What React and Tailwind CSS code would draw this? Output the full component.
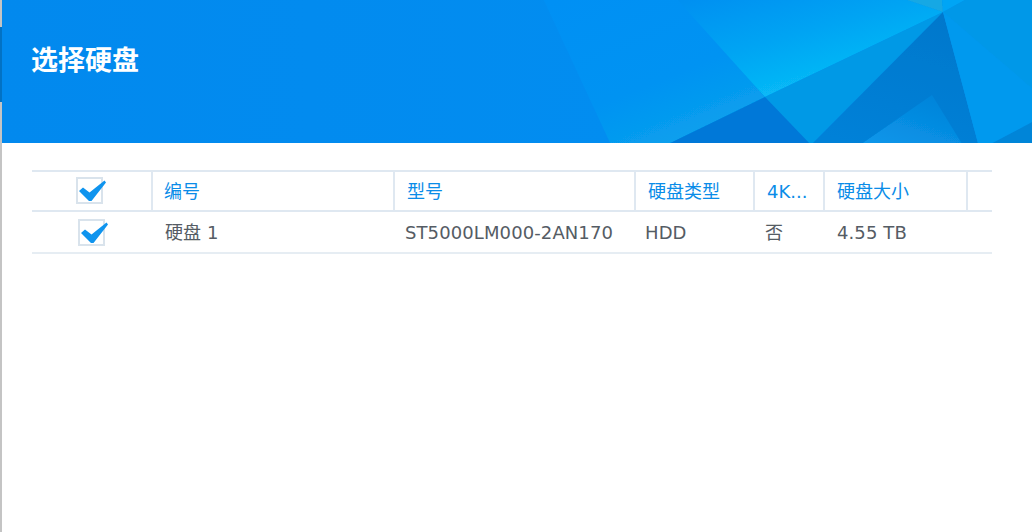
const FONT = "font-['DejaVu_Sans','Noto_Sans_CJK_SC',sans-serif]";

const COLUMNS = [
  { label: '编号', width: 'w-[242px]', pad: 'pl-[11px]' },
  { label: '型号', width: 'w-[241px]', pad: 'pl-[12px]' },
  { label: '硬盘类型', width: 'w-[119px]', pad: 'pl-[12px]' },
  { label: '4K...', width: 'w-[70px]', pad: 'pl-[12px]' },
  { label: '硬盘大小', width: 'w-[143px]', pad: 'pl-[12px]' },
];

const CELLS = [
  { text: '硬盘 1', width: 'w-[242px]', pad: 'pl-[12px]' },
  { text: 'ST5000LM000-2AN170', width: 'w-[240px]', pad: 'pl-[10px]' },
  { text: 'HDD', width: 'w-[120px]', pad: 'pl-[10px]' },
  { text: '否', width: 'w-[71px]', pad: 'pl-[10px]' },
  { text: '4.55 TB', width: 'w-[143px]', pad: 'pl-[11px]' },
];

function Check() {
  return (
    <span className="relative block h-[27px] w-[27px] border-2 border-[#d9e3ec] bg-white">
      <svg viewBox="0 0 27 21" className="absolute left-[1px] top-[1px] h-[21px] w-[27px]">
        <path d="M0 11 L4 7.5 L10.5 12.5 L25.5 0.5 L27 2.5 L12.5 21 L10 21 Z" fill="#0f94ee" />
      </svg>
    </span>
  );
}

function Banner() {
  return (
    <svg viewBox="0 0 1030 143" preserveAspectRatio="none" className="block h-[143px] w-full">
      <defs>
        <linearGradient id="base" x1="0" y1="0" x2="1" y2="0">
          <stop offset="0" stopColor="#0289ee" />
          <stop offset="0.6" stopColor="#028df0" />
          <stop offset="1" stopColor="#0297f2" />
        </linearGradient>
        <linearGradient id="light" x1="0.1" y1="0" x2="0.65" y2="0.75">
          <stop offset="0" stopColor="#0190f1" />
          <stop offset="0.55" stopColor="#02a4f3" />
          <stop offset="1" stopColor="#07b8f6" />
        </linearGradient>
        <linearGradient id="lower" x1="0.1" y1="0" x2="0.7" y2="1">
          <stop offset="0" stopColor="#0290f4" />
          <stop offset="0.6" stopColor="#0293f2" />
          <stop offset="1" stopColor="#0aa2ec" />
        </linearGradient>
        <linearGradient id="dark" x1="0.7" y1="0" x2="0.3" y2="1">
          <stop offset="0" stopColor="#0178cc" />
          <stop offset="1" stopColor="#0281d8" />
        </linearGradient>
        <linearGradient id="inner" x1="0.2" y1="1" x2="0.9" y2="0">
          <stop offset="0" stopColor="#0a96ea" />
          <stop offset="1" stopColor="#0282d8" />
        </linearGradient>
        <filter id="soft" x="-2%" y="-5%" width="104%" height="110%">
          <feGaussianBlur stdDeviation="0.7" />
        </filter>
      </defs>
      <rect width="1030" height="143" fill="url(#base)" />
      <g filter="url(#soft)">
        <polygon points="540,-4 675,-4 763,97 670,147 610,147" fill="url(#lower)" />
        <polygon points="672,-4 893,-4 941,12 763,97" fill="url(#light)" />
        <polygon points="893,-4 940,-4 941,12" fill="#12a8e4" />
        <polygon points="940,-4 970,-4 941,12" fill="#03a5f5" />
        <polygon points="970,-4 1034,-4 1034,92 941,12" fill="#0298e8" />
        <polygon points="763,97 941,12 807,147" fill="#0499e6" />
        <polygon points="763,97 811,147 660,147" fill="#0178d8" />
        <polygon points="941,12 977,147 807,147" fill="url(#dark)" />
        <polygon points="855,147 930,95 962,147" fill="url(#inner)" />
        <polygon points="941,12 1034,92 1034,120 983,147 977,147" fill="#0299ee" />
        <polygon points="983,147 1034,120 1034,147" fill="#0285d8" />
      </g>
    </svg>
  );
}

export default function App() {
  return (
    <div className={`${FONT} flex h-[532px] w-[1032px] overflow-hidden bg-white`}>
      <div className="flex w-[2px] flex-col bg-[#c4c4c4]">
        <div className="mt-[27px] h-[75px] bg-[#0272c4]" />
      </div>
      <div className="min-w-0 flex-1">
        <header className="relative overflow-hidden">
          <Banner />
          <h1 className="absolute left-[29px] top-[41px] text-[27px] leading-[40px] font-bold text-white">选择硬盘</h1>
        </header>
        <div className="ml-[30px] mr-[40px] mt-[27px] text-[18px]">
          <div className="flex h-[42px] border-y-2 border-[#dfe8f1] text-[#0a8ce8]">
            <div className="flex w-[121px] items-center border-r-2 border-[#dfe8f1] pb-[2px] pl-[44px]">
              <Check />
            </div>
            {COLUMNS.map((c) => (
              <div key={c.label} className={`flex items-center border-r-2 border-[#dfe8f1] ${c.width} ${c.pad}`}>
                {c.label}
              </div>
            ))}
          </div>
          <div className="flex h-[42px] border-b-2 border-[#e6edf3] tracking-[0.1px] text-[#555c64]">
            <div className="flex w-[121px] items-center pl-[46px] pt-[1px]">
              <Check />
            </div>
            {CELLS.map((c) => (
              <div key={c.text} className={`flex items-center ${c.width} ${c.pad}`}>
                {c.text}
              </div>
            ))}
          </div>
        </div>
      </div>
    </div>
  );
}
